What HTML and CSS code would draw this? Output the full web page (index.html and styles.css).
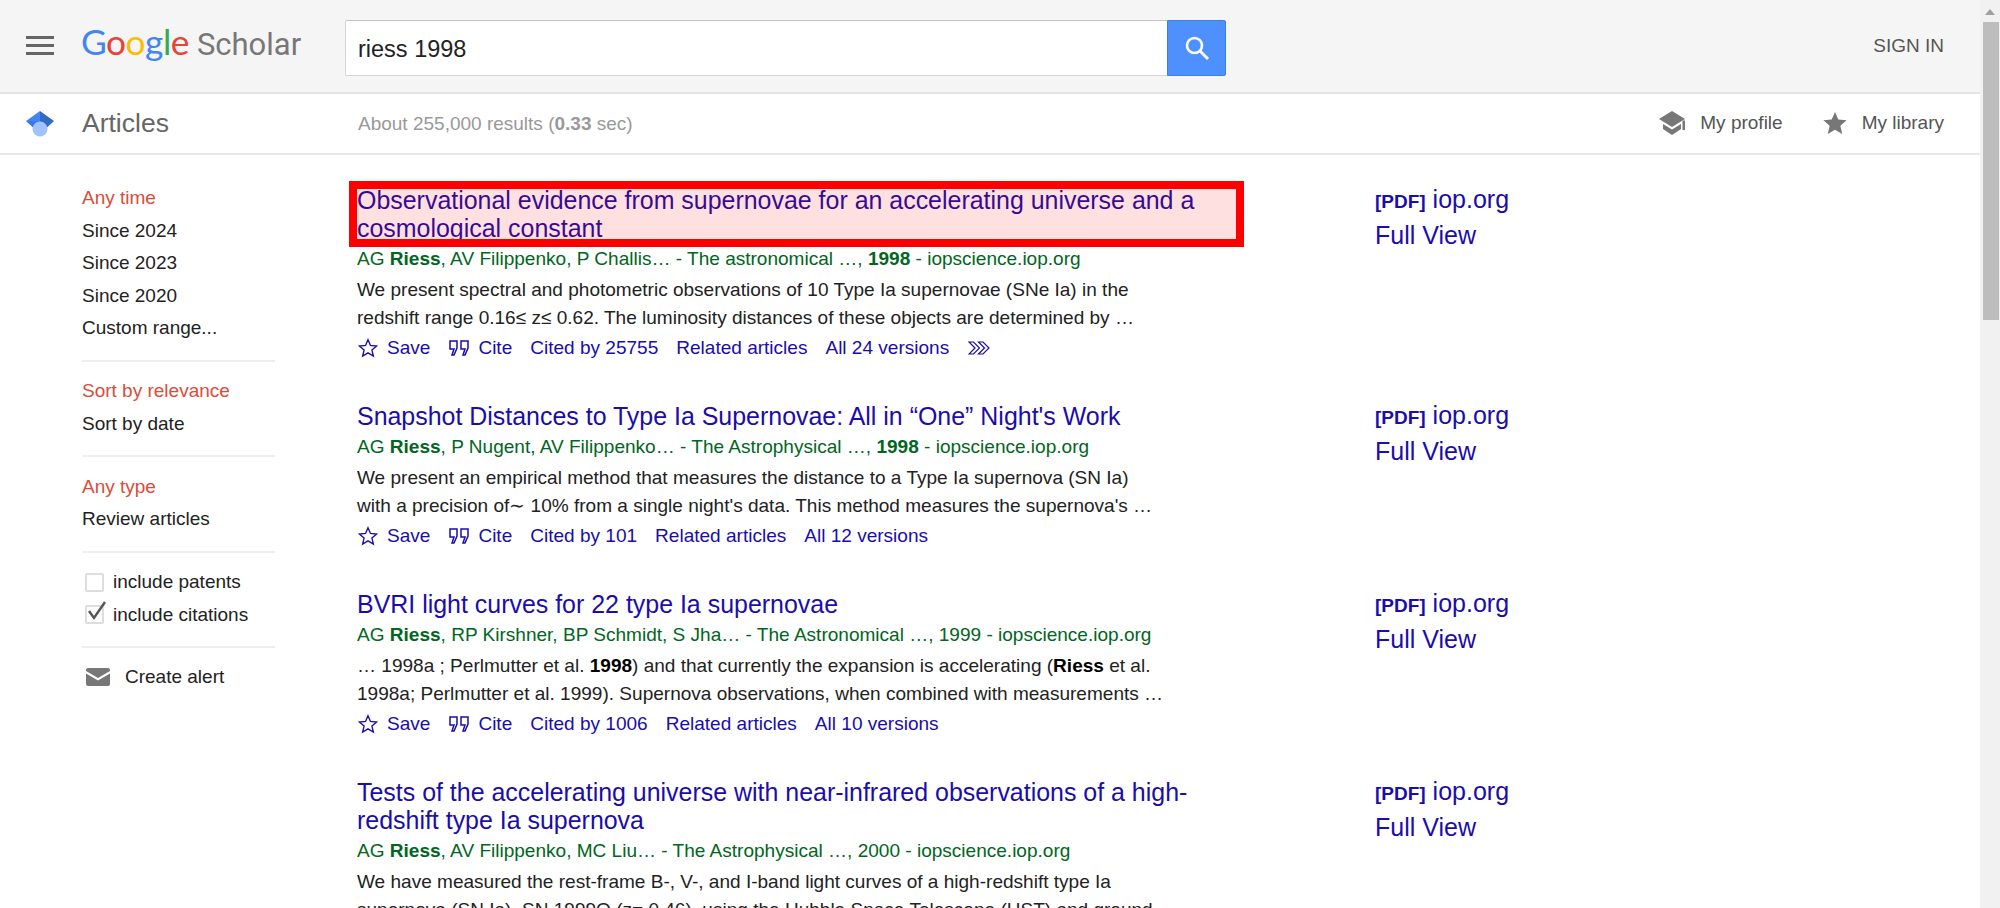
FILE: index.html
```html
<!DOCTYPE html>
<html lang="en">
<head>
<meta charset="utf-8">
<title>riess 1998 - Google Scholar</title>
<link rel="stylesheet" href="styles.css">
</head>
<body>
<div class="page">
  <header class="topbar">
    <div class="menu"><span></span><span></span><span></span></div>
    <div class="logo"><span class="lb">G</span><span class="lr">o</span><span class="ly">o</span><span class="lb">g</span><span class="lg">l</span><span class="lr">e</span><span class="scholar">Scholar</span></div>
    <form class="search">
      <div class="search-input">riess 1998</div>
      <div class="search-btn"><svg viewBox="0 0 28 28" width="28" height="28"><circle cx="11.5" cy="11.5" r="7.5" fill="none" stroke="#fff" stroke-width="2.6"/><path d="M17 17l8 8" stroke="#fff" stroke-width="3" fill="none"/></svg></div>
    </form>
    <a class="signin">SIGN IN</a>
  </header>
  <div class="subbar">
    <svg class="cap" viewBox="0 0 28 28" width="28" height="28"><path d="M14 1L0 11h14z" fill="#4285f4"/><path d="M14 1l14 10H14z" fill="#356ac3"/><path d="M0 11l7 6.500h7V11z" fill="#3b78e7"/><path d="M28 11l-7 6.500h-7V11z" fill="#356ac3"/><circle cx="14" cy="19" r="7.500" fill="#a0c3ff"/></svg>
    <div class="subtitle">Articles</div>
    <div class="count">About 255,000 results (<b>0.33</b> sec)</div>
    <div class="sublinks">
      <a class="sublink"><svg viewBox="0 0 26 24" width="26" height="24"><path d="M13 0L0 8l13 8 13-8z" fill="#777"/><path d="M23.500 9.500H26V19h-2.500z" fill="#777"/><path d="M4 13v5l9 6 9-6v-5l-9 5.500z" fill="#777"/></svg>My profile</a>
      <a class="sublink"><svg viewBox="0 0 26 26" width="24" height="24"><path d="M13 1l3.6 8.3 9 .8-6.8 6 2 8.900-7.800-4.700L5.200 25l2-8.900-6.800-6 9-.8z" fill="#777"/></svg>My library</a>
    </div>
  </div>
  <div class="content">
    <aside class="side">
      <ul class="group">
        <li class="on">Any time</li><li>Since 2024</li><li>Since 2023</li><li>Since 2020</li><li>Custom range...</li>
      </ul>
      <ul class="group">
        <li class="on">Sort by relevance</li><li>Sort by date</li>
      </ul>
      <ul class="group">
        <li class="on">Any type</li><li>Review articles</li>
      </ul>
      <ul class="group">
        <li class="chk"><span class="box"></span>include patents</li>
        <li class="chk"><span class="box"><svg viewBox="0 0 22 22" width="22" height="22"><path d="M3 10l5 7L19 1" fill="none" stroke="#555" stroke-width="2.400"/></svg></span>include citations</li>
      </ul>
      <div class="alert"><svg viewBox="0 0 24 18" width="24" height="18"><path d="M2 0h20a2 2 0 0 1 2 2v1L12 10 0 3V2a2 2 0 0 1 2-2zM0 5.500l12 7 12-7V16a2 2 0 0 1-2 2H2a2 2 0 0 1-2-2z" fill="#777"/></svg>Create alert</div>
    </aside>
    <main class="results">
      <article class="result">
        <div class="body">
          <h3 class="title hl"><a>Observational evidence from supernovae for an accelerating universe and a cosmological constant</a><span class="mark"></span></h3>
          <div class="meta">AG <b>Riess</b>, AV Filippenko, P Challis… - The astronomical …, <b>1998</b> - iopscience.iop.org</div>
          <div class="snip">We present spectral and photometric observations of 10 Type Ia supernovae (SNe Ia) in the<br>redshift range 0.16≤ z≤ 0.62. The luminosity distances of these objects are determined by …</div>
          <div class="acts">
            <a class="act"><svg class="i-star" viewBox="0 0 22 22" width="20" height="20"><path d="M11 2l2.700 6.200 6.800.6-5.200 4.500 1.600 6.700L11 16.400 5.100 20l1.600-6.700L1.500 8.800l6.800-.6z" fill="none" stroke="#1a0dab" stroke-width="1.500"/></svg>Save</a>
            <a class="act"><svg class="i-cite" viewBox="0 0 22 18" width="22" height="18"><path d="M2 2h7v7l-3 7H4l2-6H2zM13 2h7v7l-3 7h-2l2-6h-4z" fill="none" stroke="#1a0dab" stroke-width="1.500"/></svg>Cite</a>
            <a>Cited by 25755</a><a>Related articles</a><a>All 24 versions</a>
            <svg class="more" viewBox="0 0 22 14" width="22" height="14"><path d="M1 1l6 6-6 6h4.500l6-6-6-6zM10.500 1l6 6-6 6H15l6-6-6-6z" fill="none" stroke="#1a0dab" stroke-width="1.200"/></svg>
          </div>
        </div>
        <div class="links"><a><span class="pdf">[PDF]</span> iop.org</a><a>Full View</a></div>
      </article>
      <article class="result">
        <div class="body">
          <h3 class="title"><a>Snapshot Distances to Type Ia Supernovae: All in “One” Night's Work</a></h3>
          <div class="meta">AG <b>Riess</b>, P Nugent, AV Filippenko… - The Astrophysical …, <b>1998</b> - iopscience.iop.org</div>
          <div class="snip">We present an empirical method that measures the distance to a Type Ia supernova (SN Ia)<br>with a precision of∼ 10% from a single night's data. This method measures the supernova's …</div>
          <div class="acts">
            <a class="act"><svg class="i-star" viewBox="0 0 22 22" width="20" height="20"><path d="M11 2l2.700 6.200 6.800.6-5.200 4.500 1.600 6.700L11 16.400 5.100 20l1.600-6.700L1.500 8.800l6.800-.6z" fill="none" stroke="#1a0dab" stroke-width="1.500"/></svg>Save</a>
            <a class="act"><svg class="i-cite" viewBox="0 0 22 18" width="22" height="18"><path d="M2 2h7v7l-3 7H4l2-6H2zM13 2h7v7l-3 7h-2l2-6h-4z" fill="none" stroke="#1a0dab" stroke-width="1.500"/></svg>Cite</a>
            <a>Cited by 101</a><a>Related articles</a><a>All 12 versions</a>
          </div>
        </div>
        <div class="links"><a><span class="pdf">[PDF]</span> iop.org</a><a>Full View</a></div>
      </article>
      <article class="result">
        <div class="body">
          <h3 class="title"><a>BVRI light curves for 22 type Ia supernovae</a></h3>
          <div class="meta">AG <b>Riess</b>, RP Kirshner, BP Schmidt, S Jha… - The Astronomical …, 1999 - iopscience.iop.org</div>
          <div class="snip">… 1998a ; Perlmutter et al. <b class="k">1998</b>) and that currently the expansion is accelerating (<b class="k">Riess</b> et al.<br>1998a; Perlmutter et al. 1999). Supernova observations, when combined with measurements …</div>
          <div class="acts">
            <a class="act"><svg class="i-star" viewBox="0 0 22 22" width="20" height="20"><path d="M11 2l2.700 6.200 6.800.6-5.200 4.500 1.600 6.700L11 16.400 5.100 20l1.600-6.700L1.500 8.800l6.800-.6z" fill="none" stroke="#1a0dab" stroke-width="1.500"/></svg>Save</a>
            <a class="act"><svg class="i-cite" viewBox="0 0 22 18" width="22" height="18"><path d="M2 2h7v7l-3 7H4l2-6H2zM13 2h7v7l-3 7h-2l2-6h-4z" fill="none" stroke="#1a0dab" stroke-width="1.500"/></svg>Cite</a>
            <a>Cited by 1006</a><a>Related articles</a><a>All 10 versions</a>
          </div>
        </div>
        <div class="links"><a><span class="pdf">[PDF]</span> iop.org</a><a>Full View</a></div>
      </article>
      <article class="result">
        <div class="body">
          <h3 class="title"><a>Tests of the accelerating universe with near-infrared observations of a high-redshift type Ia supernova</a></h3>
          <div class="meta">AG <b>Riess</b>, AV Filippenko, MC Liu… - The Astrophysical …, 2000 - iopscience.iop.org</div>
          <div class="snip">We have measured the rest-frame B-, V-, and I-band light curves of a high-redshift type Ia<br>supernova (SN Ia), SN 1999Q (z= 0.46), using the Hubble Space Telescope (HST) and ground-</div>
        </div>
        <div class="links"><a><span class="pdf">[PDF]</span> iop.org</a><a>Full View</a></div>
      </article>
    </main>
  </div>
</div>
<div class="scrollbar"><span class="arrow"></span><span class="thumb"></span></div>
</body>
</html>
```

FILE: styles.css
```css
* { box-sizing: border-box; }
html, body { margin: 0; height: 908px; overflow: hidden; background: #fff; }
body { font-family: "Liberation Sans", Arial, sans-serif; font-size: 19px; color: #222; }
a { color: inherit; text-decoration: none; }
ul { list-style: none; margin: 0; padding: 0; }

.page { width: 1980px; }

.topbar { height: 94px; background: #f5f5f5; border-bottom: 2px solid #e5e5e5; display: flex; align-items: center; position: relative; }
.menu { width: 28px; margin-left: 26px; display: flex; flex-direction: column; gap: 5px; margin-top: -2px; }
.menu span { display: block; height: 3px; background: #666; }
.logo { margin-left: 27px; width: 259px; font-family: Lato, sans-serif; font-size: 35.300px; letter-spacing: -.5px; line-height: 40px; margin-top: -6px; white-space: nowrap; }
.lb { color: #4285f4; } .lr { color: #ea4335; } .ly { color: #fbbc05; } .lg { color: #34a853; }
.scholar { color: #777; margin-left: 8px; font-family: Roboto, sans-serif; font-size: 31px; letter-spacing: 0; }
.search { display: flex; margin-left: 5px; width: 881px; height: 56px; margin-top: 3px; }
.search-input { flex: 1; background: #fff; border: 1px solid #d4d4d4; border-top-color: #c4c4c4; border-right: 0; border-radius: 2px 0 0 2px; padding: 1px 0 0 12px; font-size: 23.500px; line-height: 54px; color: #222; }
.search-btn { width: 59px; background: #4d90fe; border: 1px solid #3a7ee8; border-radius: 0 2px 2px 0; display: flex; align-items: center; justify-content: center; }
.signin { margin-left: auto; margin-right: 36px; font-size: 19px; color: #555; }

.subbar { height: 61px; border-bottom: 2px solid #e8e8e8; display: flex; align-items: center; position: relative; }
.cap { margin-left: 26px; }
.subtitle { margin-left: 28px; width: 276px; font-size: 26.500px; color: #666; }
.count { font-size: 19px; color: #999; }
.sublinks { margin: -1px 36px 0 auto; display: flex; gap: 40px; }
.sublink { display: flex; align-items: center; gap: 15px; font-size: 19px; color: #555; }

.content { display: flex; }
.side { width: 357px; padding: 27px 0 0 82px; flex: none; color: #222; }
.group { width: 193px; border-bottom: 2px solid #eee; padding-bottom: 15px; margin-bottom: 13.500px; }
.group li { height: 32.500px; line-height: 32.500px; white-space: nowrap; }
.group li.on { color: #dd4b39; }
.chk { display: flex; align-items: center; }
.box { width: 19px; height: 19px; border: 2px solid #ddd; border-radius: 2px; margin: 0 9px 0 3px; position: relative; flex: none; background: #fff; }
.box svg { position: absolute; left: -1px; top: -6px; }
.alert { display: flex; align-items: center; gap: 15px; margin-left: 4px; height: 32px; margin-top: -1px; }

.results { flex: 1; padding-top: 31px; }
.result { display: flex; padding-bottom: 40px; }
.body { width: 1018px; flex: none; }
.title { margin: 0; width: 860px; font-size: 24.940px; line-height: 28px; font-weight: 400; color: #1a0dab; }
.hl { position: relative; }
.mark { position: absolute; left: -8px; top: -5px; width: 895px; height: 66px; border: 8px solid #f00; background: rgba(255, 0, 0, .12); }
.meta { color: #006621; font-size: 19.050px; line-height: 28px; margin-top: 3px; }
.snip { font-size: 19.050px; line-height: 28px; margin-top: 3px; }
.k { color: #000; }
.acts { display: flex; align-items: center; gap: 18px; color: #1a0dab; font-size: 19.050px; line-height: 28px; margin-top: 2px; }
.act { display: flex; align-items: center; gap: 8px; }
.i-star { margin: 0 1px 0 1px; }
.more { margin-left: 1px; }
.links { font-size: 25px; line-height: 35.500px; color: #1a0dab; margin-top: -4px; }
.links a { display: block; }
.pdf { font-size: 19px; font-weight: 700; line-height: 1; }

.scrollbar { position: fixed; top: 0; right: 0; width: 20px; height: 908px; background: #f1f1f1; }
.arrow { position: absolute; left: 5px; top: 9px; width: 0; height: 0; border-left: 5px solid transparent; border-right: 5px solid transparent; border-bottom: 6px solid #a0a0a0; }
.thumb { position: absolute; left: 3px; top: 22px; width: 16px; height: 298px; background: #bdbdbd; }
```
